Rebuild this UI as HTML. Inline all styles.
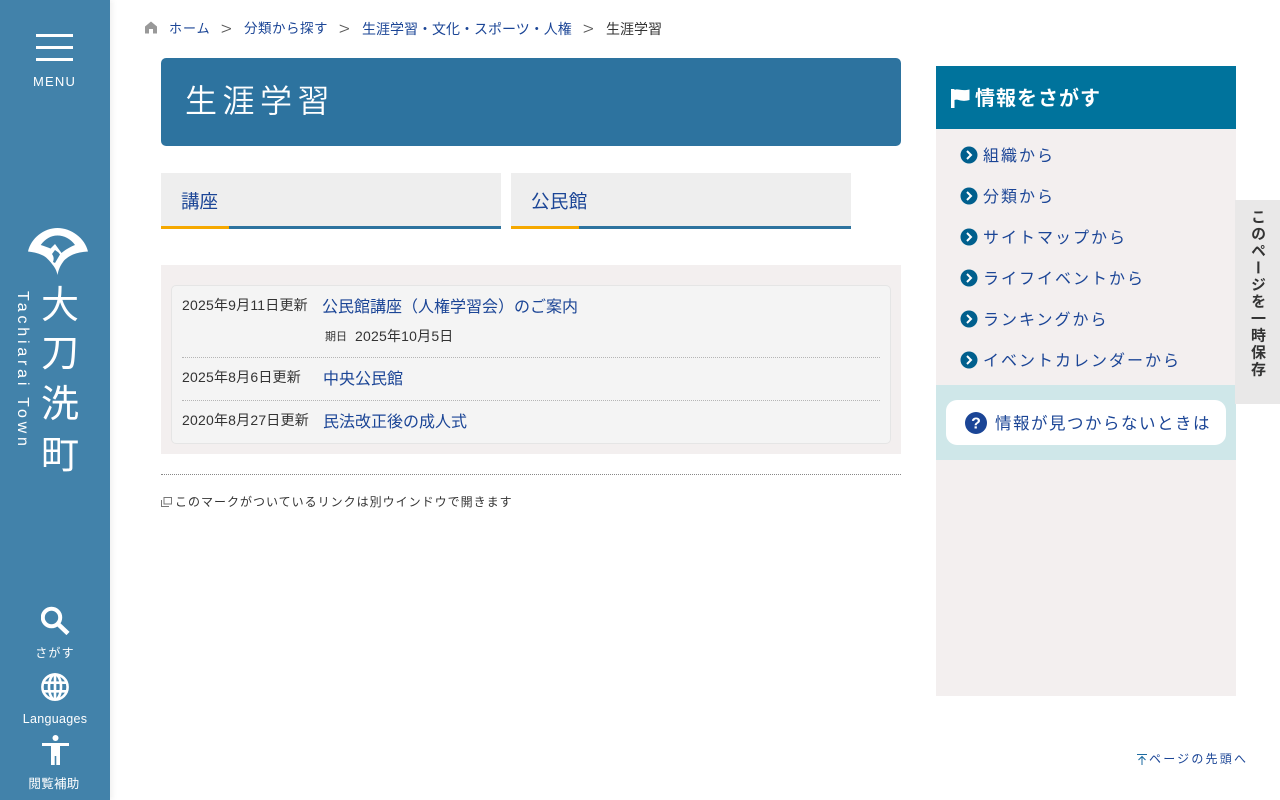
<!DOCTYPE html>
<html lang="ja"><head><meta charset="utf-8"><title>生涯学習</title>
<style>
*{box-sizing:border-box}
html,body{margin:0;padding:0;width:1280px;height:800px;overflow:hidden;background:#fff}
body{position:relative;font-family:"Liberation Sans","Noto Sans CJK JP",sans-serif;color:#333}
.a{position:absolute;white-space:nowrap}
.t{position:absolute;white-space:nowrap;line-height:20px;height:20px}
.l{color:#1b4596}
#side{position:absolute;left:0;top:0;width:110px;height:800px;background:#4282aa;box-shadow:2px 0 6px rgba(0,0,0,.07)}
.bar{position:absolute;left:36px;width:37px;height:3px;background:#fff}
.w{color:#fff}
.c{text-align:center;left:0;width:110px}
.k{position:absolute;left:40px;width:40px;text-align:center;color:#fff;font-size:38px;line-height:40px;height:40px;font-weight:400}
.nav{position:absolute;left:983px;font-size:16px;letter-spacing:2px;color:#1b4596;line-height:20px;height:20px;white-space:nowrap}
.tab{position:absolute;top:173px;width:340px;height:56px;background:#eee;border-bottom:3px solid #2d739f}
.tab i{position:absolute;left:0;bottom:-3px;width:68px;height:3px;background:#f5a800}
.sep{position:absolute;left:182px;width:698px;border-top:1px dotted #b5b5b5}
.d{letter-spacing:.2px}
.g{font-size:20px;color:#555;font-family:"Noto Sans CJK JP",sans-serif;font-weight:300}
</style></head><body>
<div id="side">
<div class="bar" style="top:34px"></div><div class="bar" style="top:46px"></div><div class="bar" style="top:58px"></div>
<div class="t w" style="left:33px;top:72px;font-size:13px;letter-spacing:1.200px">MENU</div>
<svg class="a" style="left:0;top:215px" width="110" height="70" viewBox="0 215 110 70"><path fill="#fff" fill-rule="evenodd" d="M28 251.500C31 238 44 228 57.500 228C71 228 85 238 88 251.500C82 251.800 77 252.800 73 254.500C68 257 65 259 63 262C60 266 58.500 270 57.500 275C56.500 270 54.500 267 52 264C49 260 46 257 43 255.500C38 253 33 252 28 251.500ZM40.700 245C45 239 51 235.500 57.500 235.500C64 235.500 71 239 75 245C70 247 65 250 61.500 253L55 244L50.500 248.500C47 247 44 246 40.700 245ZM55 250L58.500 252.500L60 254.500L55 263L53 262C54 259 54 257 52 254Z"/></svg>
<div class="k" style="top:286px">大</div><div class="k" style="top:334px">刀</div><div class="k" style="top:385px">洗</div><div class="k" style="top:436px">町</div>
<div class="a w" style="left:32px;top:291px;font-size:16px;letter-spacing:3.800px;line-height:20px;transform-origin:0 0;transform:rotate(90deg)">Tachiarai Town</div>
<svg class="a" style="left:41px;top:606px" width="29" height="29" viewBox="0 0 29 29"><circle cx="10.500" cy="11.500" r="8.700" fill="none" stroke="#fff" stroke-width="4"/><path d="M17 18L27 27.500" stroke="#fff" stroke-width="4.500" fill="none"/></svg>
<div class="t w c" style="top:643px;font-size:12px;letter-spacing:1.200px">さがす</div>
<svg class="a" style="left:41px;top:673px" width="28" height="28" viewBox="0 0 28 28" fill="none" stroke="#fff" stroke-width="2.600"><circle cx="14" cy="14" r="12.600"/><ellipse cx="14" cy="14" rx="6" ry="12.600"/><path d="M2 9.700H26M2 18.300H26M14 1V27"/></svg>
<div class="t w c" style="top:709px;font-size:12.500px;letter-spacing:.3px">Languages</div>
<svg class="a" style="left:42px;top:735px" width="27" height="31" viewBox="0 0 27 31" fill="#fff"><circle cx="13.500" cy="3" r="3"/><path d="M0 8H27V11H18V30H14.300V21H12.700V30H9V11H0Z"/></svg>
<div class="t w c" style="top:774px;left:-1px;font-size:12.500px;letter-spacing:.3px">閲覧補助</div>
</div>

<svg class="a" style="left:145px;top:21px" width="12" height="13" viewBox="0 0 12 13"><path fill="#999" d="M6 0.500L12 5.500V12.500H8V8H4V12.500H0V5.500Z"/></svg>
<div class="t l" style="left:169px;top:19px;font-size:13px;letter-spacing:1px">ホーム</div>
<div class="t g" style="left:221px;top:18px">&gt;</div>
<div class="t l" style="left:244px;top:19px;font-size:13.500px;letter-spacing:.5px">分類から探す</div>
<div class="t g" style="left:339px;top:18px">&gt;</div>
<div class="t l" style="left:362px;top:19px;font-size:14px">生涯学習・文化・スポーツ・人権</div>
<div class="t g" style="left:583px;top:18px">&gt;</div>
<div class="t" style="left:606px;top:19px;font-size:14px">生涯学習</div>

<div class="a" style="left:161px;top:58px;width:740px;height:88px;background:#2d739f;border-radius:5px"></div>
<div class="a w" style="left:185px;top:81px;font-size:32px;letter-spacing:5.500px;line-height:40px;font-weight:350">生涯学習</div>

<div class="tab" style="left:161px"><i></i></div>
<div class="t l" style="left:181px;top:192px;font-size:18.500px">講座</div>
<div class="tab" style="left:511px"><i></i></div>
<div class="t l" style="left:531px;top:192px;font-size:18.500px;letter-spacing:.4px">公民館</div>

<div class="a" style="left:161px;top:265px;width:740px;height:189px;background:#f3efef"></div>
<div class="a" style="left:171px;top:285px;width:720px;height:159px;background:#f4f4f4;border:1px solid #e5e5e5;border-radius:5px"></div>
<div class="t d" style="left:182px;top:295px;font-size:14px">2025年9月11日更新</div>
<div class="t l" style="left:322px;top:298px;font-size:16px">公民館講座（人権学習会）のご案内</div>
<div class="t" style="left:325px;top:327px;font-size:11px">期日</div>
<div class="t d" style="left:355px;top:326px;font-size:14px">2025年10月5日</div>
<div class="sep" style="top:357px"></div>
<div class="t d" style="left:182px;top:367px;font-size:14px">2025年8月6日更新</div>
<div class="t l" style="left:323px;top:370px;font-size:16px">中央公民館</div>
<div class="sep" style="top:400px"></div>
<div class="t d" style="left:182px;top:410px;font-size:14px">2020年8月27日更新</div>
<div class="t l" style="left:323px;top:413px;font-size:16px">民法改正後の成人式</div>

<div class="a" style="left:161px;top:474px;width:740px;border-top:1px dotted #888"></div>
<svg class="a" style="left:161px;top:497px" width="11" height="10" viewBox="0 0 11 10" fill="none" stroke="#777"><path d="M.5 3V9.500H8M3 .5H10.500V7H3Z"/></svg>
<div class="t" style="left:175px;top:492px;font-size:12px;letter-spacing:1px">このマークがついているリンクは別ウインドウで開きます</div>

<div class="a" style="left:936px;top:66px;width:300px;height:630px;background:#f3efef"></div>
<div class="a" style="left:936px;top:66px;width:300px;height:63px;background:#00739c"></div>
<svg class="a" style="left:951px;top:88px" width="19" height="20" viewBox="0 0 19 20" fill="#fff"><path d="M0 1H3.500V2C7 0 10 3.500 18.500 1.500V12C10 14.500 7 10.500 3.500 12V20H0Z"/></svg>
<div class="t w" style="left:975px;top:89px;font-size:20px;letter-spacing:1px;font-weight:700">情報をさがす</div>

<svg class="a" style="left:960px;top:146px" width="18" height="224" viewBox="0 0 18 224">
<g><circle cx="9" cy="9" r="8.500" fill="#005f8d"/><path d="M7 5L11 9L7 13" fill="none" stroke="#fff" stroke-width="2"/></g>
<g transform="translate(0,41)"><circle cx="9" cy="9" r="8.500" fill="#005f8d"/><path d="M7 5L11 9L7 13" fill="none" stroke="#fff" stroke-width="2"/></g>
<g transform="translate(0,82)"><circle cx="9" cy="9" r="8.500" fill="#005f8d"/><path d="M7 5L11 9L7 13" fill="none" stroke="#fff" stroke-width="2"/></g>
<g transform="translate(0,123)"><circle cx="9" cy="9" r="8.500" fill="#005f8d"/><path d="M7 5L11 9L7 13" fill="none" stroke="#fff" stroke-width="2"/></g>
<g transform="translate(0,164)"><circle cx="9" cy="9" r="8.500" fill="#005f8d"/><path d="M7 5L11 9L7 13" fill="none" stroke="#fff" stroke-width="2"/></g>
<g transform="translate(0,205)"><circle cx="9" cy="9" r="8.500" fill="#005f8d"/><path d="M7 5L11 9L7 13" fill="none" stroke="#fff" stroke-width="2"/></g>
</svg>
<div class="nav" style="top:147px">組織から</div>
<div class="nav" style="top:188px">分類から</div>
<div class="nav" style="top:229px">サイトマップから</div>
<div class="nav" style="top:270px">ライフイベントから</div>
<div class="nav" style="top:311px">ランキングから</div>
<div class="nav" style="top:352px">イベントカレンダーから</div>

<div class="a" style="left:936px;top:385px;width:300px;height:75px;background:#cfe7e9"></div>
<div class="a" style="left:946px;top:400px;width:280px;height:45px;background:#fff;border-radius:11px"></div>
<svg class="a" style="left:965px;top:412px" width="22" height="22" viewBox="0 0 22 22"><circle cx="11" cy="11" r="11" fill="#1b4596"/><text x="11" y="16.500" text-anchor="middle" font-family="Liberation Sans" font-weight="700" font-size="16" fill="#fff">?</text></svg>
<div class="nav" style="left:995px;top:414px;font-size:16.500px;letter-spacing:1.500px">情報が見つからないときは</div>

<div class="a" style="left:1235px;top:200px;width:45px;height:204px;background:#e9e8e8"></div>
<div class="a" style="left:1247px;top:209px;width:20px;writing-mode:vertical-rl;font-size:15px;letter-spacing:1.900px;font-weight:700;line-height:20px;color:#333">このページを一時保存</div>

<svg class="a" style="left:1137px;top:754px" width="10" height="11" viewBox="0 0 10 11" fill="none" stroke="#1b6aa0"><path d="M0 .5H10M5 11V3M1.500 6L5 2.500L8.500 6"/></svg>
<div class="t l" style="left:1149px;top:749px;font-size:12px;letter-spacing:2.200px">ページの先頭へ</div>
</body></html>
